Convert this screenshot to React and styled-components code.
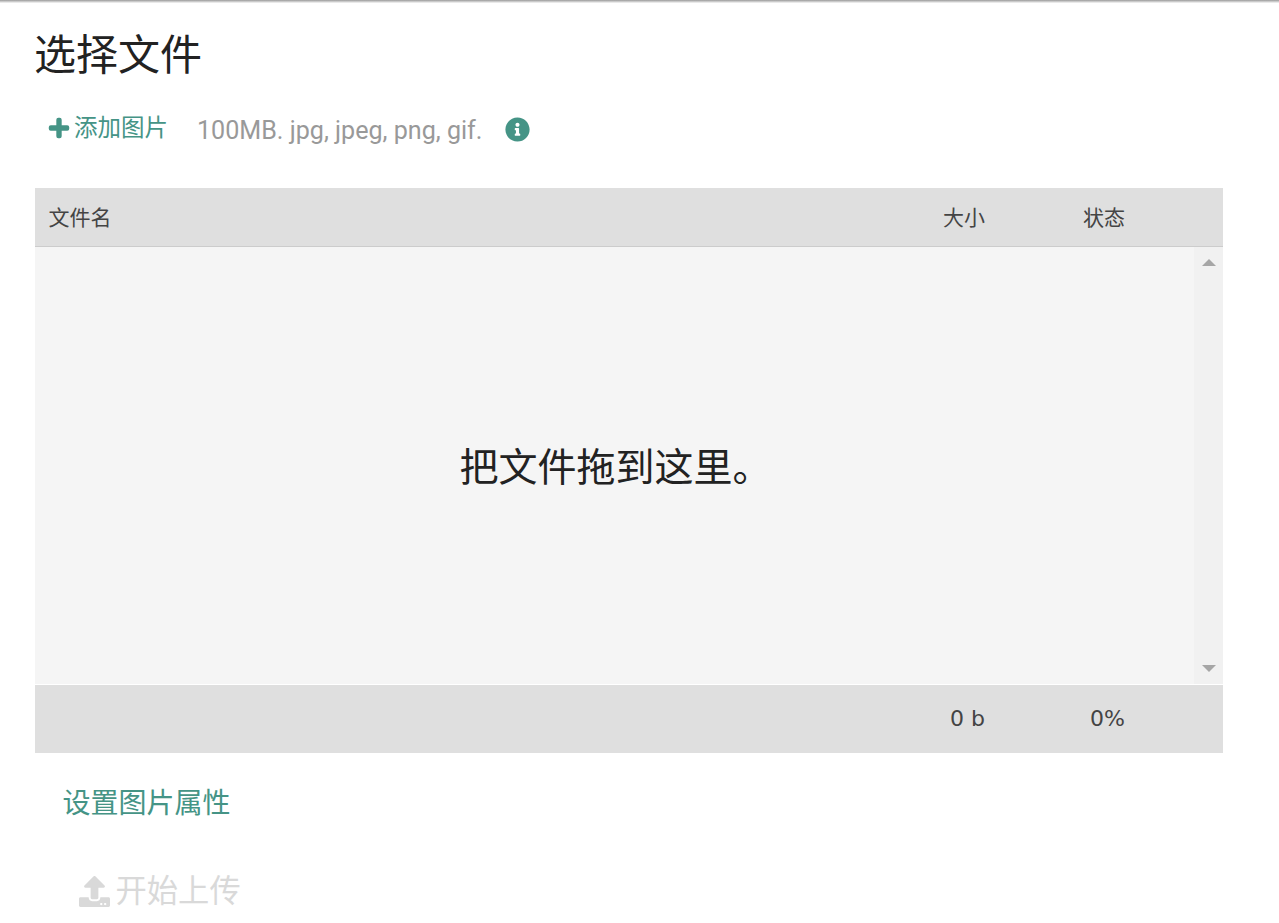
import React from "react";
import styled, { createGlobalStyle } from "styled-components";
import { FaPlus, FaInfoCircle, FaUpload } from "react-icons/fa";

const FONT = `Roboto, "Noto Sans CJK SC", sans-serif`;

const Global = createGlobalStyle`
  html, body { margin: 0; padding: 0; background: #fff; height: 923px; overflow: hidden; }
  body { font-family: ${FONT}; }
`;

const TopShadow = styled.div`
  height: 3px;
  background: linear-gradient(#999, #d4d4d4 60%, #f8f8f8);
`;

const Page = styled.main`
  padding: 0 56px 0 35px;
`;

const Title = styled.h1`
  margin: 0 0 0 -1px;
  padding-top: 27px;
  font-size: 42px;
  line-height: 52px;
  font-weight: 400;
  color: #222;
`;

const Toolbar = styled.div`
  display: flex;
  align-items: center;
  height: 50px;
  margin-top: 22px;
  padding-left: 13px;
`;

const AddButton = styled.button`
  display: flex;
  align-items: center;
  gap: 4px;
  border: 0;
  background: none;
  padding: 0 0 3px;
  font: 23.5px/30px ${FONT};
  color: #459486;
  svg { width: 22px; height: 22px; overflow: visible; stroke: currentColor; stroke-width: 28; stroke-linejoin: miter; }
`;

const Hint = styled.span`
  margin-left: 29px;
  font-size: 25.1px;
  line-height: 30px;
  color: #999;
  position: relative;
  top: 2px;
`;

const InfoIcon = styled(FaInfoCircle)`
  width: 25px;
  height: 25px;
  margin-left: 23px;
  color: #459486;
`;

const Table = styled.section`
  margin-top: 34px;
  width: 1188px;
`;

const HeaderRow = styled.div`
  display: grid;
  grid-template-columns: 1fr 140px 140px 98px;
  align-items: center;
  padding: 0 0 3px 13.5px;
  height: 55px;
  background: #dfdfdf;
  border-bottom: 1px solid #ccc;
  font-size: 21px;
  color: #444;
`;

const FooterRow = styled(HeaderRow)`
  height: 67px;
  padding-bottom: 1px;
  border-bottom: 0;
  border-top: 1px solid #fff;
  font-family: "DejaVu Sans", sans-serif;
  font-size: 22px;
`;

const Cell = styled.div`
  text-align: right;
`;

const Body = styled.div`
  display: flex;
  height: 437px;
  background: #f5f5f5;
`;

const DropZone = styled.div`
  flex: 1;
  display: flex;
  align-items: center;
  justify-content: center;
  padding-left: 2px;
  padding-bottom: 3px;
  font-size: 39px;
  color: #222;
`;

const Scrollbar = styled.div`
  width: 29px;
  background: #f1f1f1;
  display: flex;
  flex-direction: column;
  justify-content: space-between;
  align-items: center;
  padding: 12px 0;
`;

const ScrollArrow = styled.span`
  display: block;
  width: 0;
  height: 0;
  border-left: 7px solid transparent;
  border-right: 7px solid transparent;
  ${(p) => (p.$down ? "border-top: 7px solid #a6a6a6;" : "border-bottom: 7px solid #a6a6a6;")}
`;

const SettingsLink = styled.a`
  display: block;
  margin: 33px 0 0 27.5px;
  font-size: 28px;
  line-height: 36px;
  color: #459486;
`;

const UploadButton = styled.button`
  display: flex;
  align-items: center;
  gap: 6px;
  margin: 50px 0 0 43.5px;
  padding: 0;
  border: 0;
  background: none;
  font: 31.3px/40px ${FONT};
  color: #d9d9d9;
  svg { width: 31px; height: 31px; position: relative; top: -1px; }
`;

export default function App() {
  return (
    <>
      <Global />
      <TopShadow />
      <Page>
        <Title>选择文件</Title>
        <Toolbar>
          <AddButton><FaPlus />添加图片</AddButton>
          <Hint>100MB. jpg, jpeg, png, gif.</Hint>
          <InfoIcon />
        </Toolbar>
        <Table>
          <HeaderRow>
            <div>文件名</div>
            <Cell>大小</Cell>
            <Cell>状态</Cell>
            <div />
          </HeaderRow>
          <Body>
            <DropZone>把文件拖到这里。</DropZone>
            <Scrollbar>
              <ScrollArrow />
              <ScrollArrow $down />
            </Scrollbar>
          </Body>
          <FooterRow>
            <div />
            <Cell>0 b</Cell>
            <Cell>0%</Cell>
            <div />
          </FooterRow>
        </Table>
        <SettingsLink>设置图片属性</SettingsLink>
        <UploadButton><FaUpload />开始上传</UploadButton>
      </Page>
    </>
  );
}
